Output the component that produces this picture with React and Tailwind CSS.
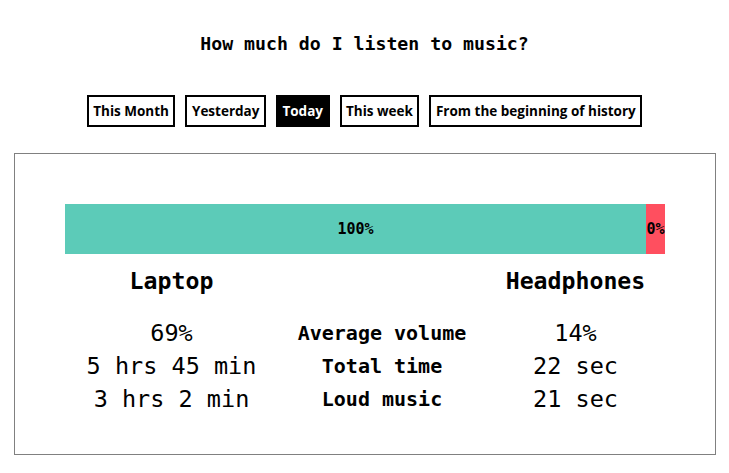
import React, { useState } from "react";

const ranges = ["This Month", "Yesterday", "Today", "This week", "From the beginning of history"];

const rows = [
  ["69%", "Average volume", "14%"],
  ["5 hrs 45 min", "Total time", "22 sec"],
  ["3 hrs 2 min", "Loud music", "21 sec"],
];

export default function App() {
  const [range, setRange] = useState("Today");

  return (
    <div className="w-[729px] min-h-[473px] bg-white text-black font-['DejaVu_Sans_Mono',monospace]">
      <div className="pt-[33px] text-center font-bold text-[18.2px] leading-[22px]">
        How much do I listen to music?
      </div>

      <div className="mt-[40px] flex justify-center gap-[10px] font-['Open_Sans',sans-serif]">
        {ranges.map((r) => (
          <button
            key={r}
            onClick={() => setRange(r)}
            className={
              r === range
                ? "h-[32px] flex items-center px-[4.5px] border-2 border-black bg-black text-white text-[13.5px] font-bold"
                : "h-[32px] flex items-center px-[4.5px] border-2 border-black bg-white text-black text-[13.5px] font-bold"
            }
          >
            {r}
          </button>
        ))}
      </div>

      <div className="mt-[26px] ml-[14px] w-[702px] border border-[#808080] px-[50px] pt-[50px] pb-[39px]">
        <div className="flex h-[50px] text-[15px] font-bold">
          <div className="flex-1 bg-[#5ccbb8] flex items-center justify-center">100%</div>
          <div className="w-[19px] bg-[#ff4f5f] flex items-center justify-center overflow-visible whitespace-nowrap">
            0%
          </div>
        </div>

        <div className="grid grid-cols-[213px_208px_179px] h-[54px] items-center text-[23.2px] font-bold text-center">
          <div>Laptop</div>
          <div></div>
          <div>Headphones</div>
        </div>

        <div className="mt-[8px]">
          {rows.map(([a, label, b]) => (
            <div key={label} className="grid grid-cols-[213px_208px_179px] h-[33px] items-center text-center">
              <div className="text-[23.5px] leading-[28px]">{a}</div>
              <div className="text-[20px] leading-[24px] font-bold">{label}</div>
              <div className="text-[23.5px] leading-[28px]">{b}</div>
            </div>
          ))}
        </div>
      </div>
    </div>
  );
}
